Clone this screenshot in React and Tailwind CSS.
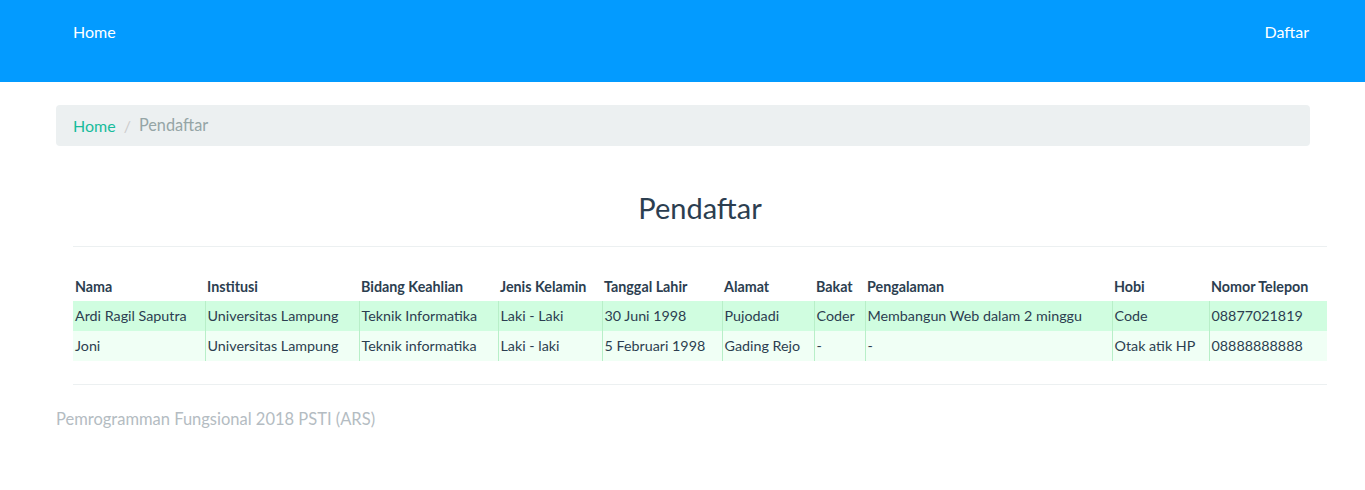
import React from 'react';

const columns = [
  { label: 'Nama', width: 'w-[132px]' },
  { label: 'Institusi', width: 'w-[154px]' },
  { label: 'Bidang Keahlian', width: 'w-[139px]' },
  { label: 'Jenis Kelamin', width: 'w-[104px]' },
  { label: 'Tanggal Lahir', width: 'w-[120px]' },
  { label: 'Alamat', width: 'w-[92px]' },
  { label: 'Bakat', width: 'w-[51px]' },
  { label: 'Pengalaman', width: 'w-[247px]' },
  { label: 'Hobi', width: 'w-[97px]' },
  { label: 'Nomor Telepon', width: 'w-[118px]' },
];

const pendaftar = [
  ['Ardi Ragil Saputra', 'Universitas Lampung', 'Teknik Informatika', 'Laki - Laki', '30 Juni 1998', 'Pujodadi', 'Coder', 'Membangun Web dalam 2 minggu', 'Code', '08877021819'],
  ['Joni', 'Universitas Lampung', 'Teknik informatika', 'Laki - laki', '5 Februari 1998', 'Gading Rejo', '-', '-', 'Otak atik HP', '08888888888'],
];

const App = () => {
  return (
    <div className="min-h-[490px] bg-white font-['Lato','Liberation_Sans',sans-serif] text-[#2c3e50]">
      {/* navbar */}
      <nav className="h-[82px] bg-[#039bff] flex items-start justify-between pl-[73px] pr-[56px] pt-[21px] text-[16px] text-white">
        <a href="#" className="leading-[22px]">Home</a>
        <a href="#" className="leading-[22px]">Daftar</a>
      </nav>

      <div className="pl-[56px] pr-[38px] pt-[23px]">
        {/* breadcrumb */}
        <div className="mr-[17px] h-[41px] rounded bg-[#ecf0f1] flex items-center px-[17px] text-[16px]">
          <a href="#" className="text-[#18bc9c]">Home</a>
          <span className="px-[8px] text-[#ccc]">/</span>
          <span className="text-[#95a5a6] text-[16.3px]">Pendaftar</span>
        </div>

        <div className="pl-[17px]">
          <h1 className="text-center text-[29px] leading-[36px] mt-[44px] mb-[20px] text-[#2c3e50]">Pendaftar</h1>
          <hr className="border-t border-[#ecf0f1]" />

          <table className="mt-[25px] w-full table-fixed border-collapse text-[14.3px]">
            <colgroup>
              {columns.map((c) => (
                <col key={c.label} className={c.width} />
              ))}
            </colgroup>
            <thead>
              <tr>
                {columns.map((c) => (
                  <th key={c.label} className="text-left font-bold px-[2px] h-[29px] align-middle whitespace-nowrap">{c.label}</th>
                ))}
              </tr>
            </thead>
            <tbody>
              {pendaftar.map((row, i) => (
                <tr key={i} className={i === 0 ? 'bg-[#d0fde0]' : 'bg-[#f0fff5]'}>
                  {row.map((cell, j) => (
                    <td
                      key={j}
                      className={`px-[2px] h-[30px] whitespace-nowrap ${j > 0 ? 'border-l border-[#b8efc8]' : ''}`}
                    >
                      {cell}
                    </td>
                  ))}
                </tr>
              ))}
            </tbody>
          </table>

          <hr className="mt-[23px] border-t border-[#ecf0f1]" />
        </div>

        <footer className="pt-[22px] text-[16.5px] leading-[24px] text-[#b4bcc2]">
          Pemrogramman Fungsional 2018 PSTI (ARS)
        </footer>
      </div>
    </div>
  );
};

export default App;
